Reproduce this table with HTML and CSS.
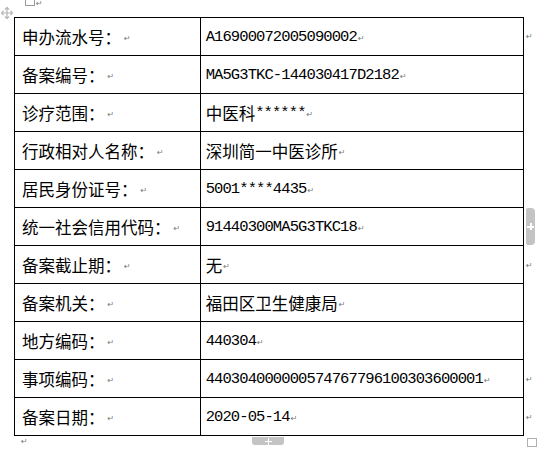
FILE: index.html
```html
<!DOCTYPE html>
<html lang="zh">
<head>
<meta charset="utf-8">
<link rel="stylesheet" href="styles.css">
</head>
<body>
<div class="doc">
  <div class="above">
    <svg class="move" width="12" height="12" viewBox="0 0 12 12">
      <path d="M6 0.5V11.5M0.5 6H11.5" stroke="#b4b4b4" stroke-width="1.2" fill="none"/>
      <path d="M4 2.5L6 0.5L8 2.5M4 9.5L6 11.5L8 9.5M2.5 4L0.5 6L2.5 8M9.5 4L11.5 6L9.5 8" stroke="#b4b4b4" stroke-width="1.2" fill="none"/>
    </svg>
    <span class="box"></span><span class="pm top">↵</span>
  </div>
  <div class="tbl">
    <div class="row first"><div class="k">申办流水号：<span class="pm">↵</span></div><div class="v mono">A16900072005090002<span class="pm">↵</span></div><div class="end"><span class="pm">↵</span></div></div>
    <div class="row"><div class="k">备案编号：<span class="pm">↵</span></div><div class="v mono">MA5G3TKC-144030417D2182<span class="pm">↵</span></div><div class="end"></div></div>
    <div class="row"><div class="k">诊疗范围：<span class="pm">↵</span></div><div class="v"><span class="zh">中医科</span><span class="mono">******</span><span class="pm">↵</span></div><div class="end"></div></div>
    <div class="row"><div class="k">行政相对人名称：<span class="pm">↵</span></div><div class="v"><span class="zh">深圳简一中医诊所</span><span class="pm">↵</span></div><div class="end"></div></div>
    <div class="row"><div class="k">居民身份证号：<span class="pm">↵</span></div><div class="v mono">5001****4435<span class="pm">↵</span></div><div class="end"></div></div>
    <div class="row"><div class="k">统一社会信用代码：<span class="pm">↵</span></div><div class="v mono">91440300MA5G3TKC18<span class="pm">↵</span></div><div class="end"></div></div>
    <div class="row"><div class="k">备案截止期：<span class="pm">↵</span></div><div class="v"><span class="zh">无</span><span class="pm">↵</span></div><div class="end"><span class="pm">↵</span></div></div>
    <div class="row"><div class="k">备案机关：<span class="pm">↵</span></div><div class="v"><span class="zh">福田区卫生健康局</span><span class="pm">↵</span></div><div class="end"></div></div>
    <div class="row"><div class="k">地方编码：<span class="pm">↵</span></div><div class="v mono">440304<span class="pm">↵</span></div><div class="end"></div></div>
    <div class="row"><div class="k">事项编码：<span class="pm">↵</span></div><div class="v mono">440304000000574767796100303600001<span class="pm">↵</span></div><div class="end"><span class="pm">↵</span></div></div>
    <div class="row"><div class="k">备案日期：<span class="pm">↵</span></div><div class="v mono">2020-05-14<span class="pm">↵</span></div><div class="end"><span class="pm">↵</span></div></div>
    <div class="coltab"><span class="plus"></span></div>
  </div>
  <div class="after">
    <span class="pm">↵</span>
    <div class="rowtab"><span class="plus"></span></div>
    <span class="resize"></span>
  </div>
</div>
</body>
</html>
```
FILE: styles.css
```css
html, body {
  margin: 0;
  padding: 0;
  background: #ffffff;
}
body {
  width: 541px;
  height: 453px;
  overflow: hidden;
  font-family: "Noto Sans CJK SC", sans-serif;
  color: #000;
}
.doc {
  position: relative;
}
.above {
  position: relative;
  height: 17px;
}
.move {
  position: absolute;
  left: 1px;
  top: 7px;
}
.box {
  position: absolute;
  left: 25px;
  top: -4px;
  width: 8px;
  height: 8px;
  border: 1px solid #9a9a9a;
}
.pm {
  font-family: "DejaVu Sans", sans-serif;
  font-size: 8px;
  color: #777;
  margin-left: 1px;
  letter-spacing: 0;
  position: relative;
  top: 2px;
}
.pm.top {
  position: absolute;
  left: 35px;
  top: 0;
  line-height: 8px;
}
.tbl {
  position: relative;
  margin-left: 14px;
  width: 527px;
}
.row {
  display: flex;
  height: 38px;
}
.row.first {
  height: 39px;
}
.k, .v {
  box-sizing: border-box;
  display: flex;
  align-items: center;
  border-bottom: 1px solid #000;
  border-right: 1px solid #000;
  font-size: 16.5px;
  white-space: nowrap;
}
.row.first .k, .row.first .v {
  border-top: 1px solid #000;
}
.k {
  width: 187px;
  border-left: 1px solid #000;
  padding-left: 7px;
}
.k .pm {
  margin-left: 3px;
}
.v {
  width: 324px;
  padding-left: 5px;
}
.mono {
  font-family: "Liberation Mono", monospace;
  font-size: 15.5px;
  letter-spacing: -0.9px;
}
.v .zh {
  font-family: "Noto Sans CJK SC", sans-serif;
  font-size: 16.5px;
}
.end {
  width: 16px;
  padding-left: 1px;
  padding-top: 3px;
}
.end .pm {
  top: 0;
}
.coltab {
  position: absolute;
  left: 512px;
  top: 191px;
  width: 9px;
  height: 37px;
  background: #c4c4c4;
  border-radius: 2px 4px 4px 2px;
  display: flex;
  align-items: center;
  justify-content: center;
}
.plus {
  position: relative;
  width: 7px;
  height: 7px;
}
.plus::before, .plus::after {
  content: "";
  position: absolute;
  background: #fff;
}
.plus::before {
  left: 3px;
  top: 0;
  width: 1.5px;
  height: 7px;
}
.plus::after {
  left: 0;
  top: 3px;
  width: 7px;
  height: 1.5px;
}
.after {
  position: relative;
  height: 17px;
}
.after .pm {
  position: absolute;
  left: 20px;
  top: 1px;
}
.rowtab {
  position: absolute;
  left: 252px;
  top: 1px;
  width: 32px;
  height: 8px;
  background: #c4c4c4;
  border-radius: 0 0 3px 3px;
  display: flex;
  align-items: center;
  justify-content: center;
}
.resize {
  position: absolute;
  left: 527px;
  top: 2px;
  width: 8px;
  height: 7px;
  border: 1px solid #b0b0b0;
}
```
